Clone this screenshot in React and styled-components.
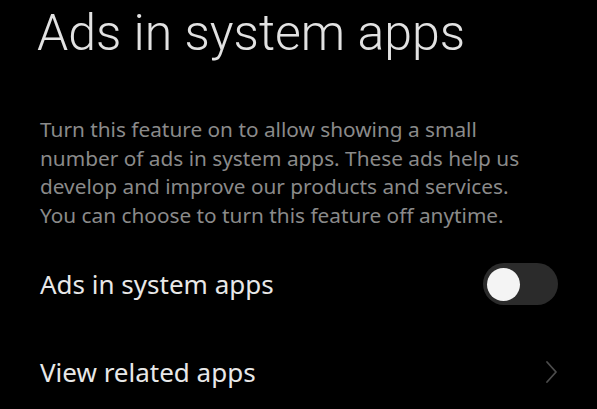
import React from "react";
import styled, { createGlobalStyle } from "styled-components";

const Global = createGlobalStyle`
  html, body { margin: 0; padding: 0; background: #000; }
  body { width: 597px; height: 409px; overflow: hidden; }
  * { box-sizing: border-box; }
`;

const Page = styled.div`
  width: 597px;
  height: 409px;
  background: #000;
  padding: 3px 39px 0 37px;
  display: flex;
  flex-direction: column;
`;

const Title = styled.h1`
  margin: 0;
  font-family: Roboto, "Noto Sans", sans-serif;
  font-weight: 300;
  font-size: 50px;
  line-height: 60px;
  color: #e2e2e2;
  letter-spacing: 0;
`;

const Description = styled.p`
  margin: 52px 0 0 3px;
  max-width: 505px;
  font-family: "Noto Sans", "Open Sans", sans-serif;
  font-weight: 400;
  font-size: 20.8px;
  line-height: 28.5px;
  color: #8a8a8a;
`;

const Row = styled.div`
  display: flex;
  align-items: center;
  justify-content: space-between;
  height: ${(p) => p.$h}px;
  margin-top: ${(p) => p.$mt}px;
  padding-left: 3px;
`;

const Label = styled.span`
  font-family: "Noto Sans", "Open Sans", sans-serif;
  font-size: 26px;
  color: #e8e8e8;
`;

const Track = styled.div`
  width: 75px;
  height: 42px;
  border-radius: 21px;
  background: #2b2b2b;
  display: flex;
  align-items: center;
  padding-left: 4px;
`;

const Knob = styled.div`
  width: 33px;
  height: 33px;
  border-radius: 50%;
  background: #f4f4f4;
`;

const Chevron = styled.svg`
  width: 14px;
  height: 24px;
  margin-right: -1px;
`;

export default function App() {
  return (
    <>
      <Global />
      <Page>
        <Title>Ads in system apps</Title>
        <Description>
          Turn this feature on to allow showing a small number of ads in system apps. These ads help us develop and improve our products and services. You can choose to turn this feature off anytime.
        </Description>
        <Row $h={60} $mt={25}>
          <Label>Ads in system apps</Label>
          <Track>
            <Knob />
          </Track>
        </Row>
        <Row $h={60} $mt={28}>
          <Label>View related apps</Label>
          <Chevron viewBox="0 0 14 24">
            <path d="M2 2 L11 12 L2 22" fill="none" stroke="#4c4c4c" strokeWidth="1.8" strokeLinecap="round" strokeLinejoin="round" />
          </Chevron>
        </Row>
      </Page>
    </>
  );
}
